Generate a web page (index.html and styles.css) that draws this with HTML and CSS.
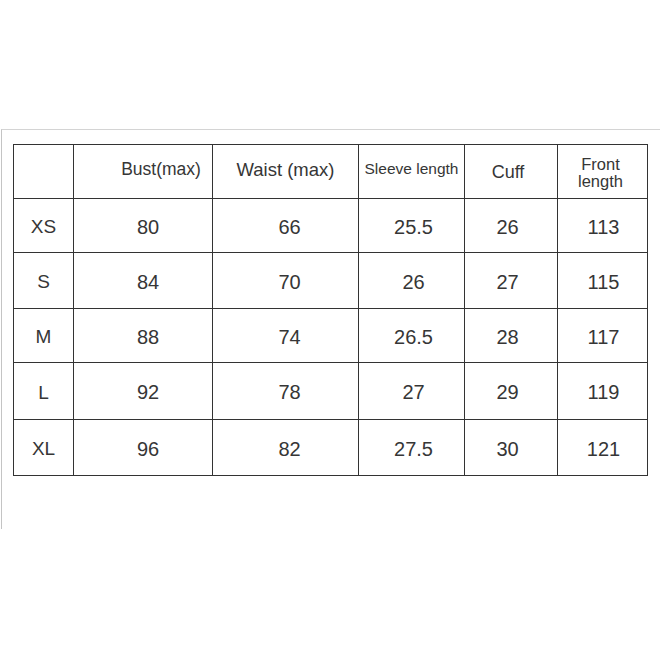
FILE: index.html
```html
<!DOCTYPE html>
<html>
<head>
<meta charset="utf-8">
<link rel="stylesheet" href="styles.css">
</head>
<body>
<div class="frame">
  <div class="chart">
    <div class="cell head"></div>
    <div class="cell head bust">Bust(max)</div>
    <div class="cell head waist">Waist (max)</div>
    <div class="cell head sleeve">Sleeve length</div>
    <div class="cell head cuff">Cuff</div>
    <div class="cell head front">Front<br>length</div>

    <div class="cell size">XS</div><div class="cell c2">80</div><div class="cell c3">66</div><div class="cell c4">25.5</div><div class="cell c5">26</div><div class="cell c6">113</div>
    <div class="cell size">S</div><div class="cell c2">84</div><div class="cell c3">70</div><div class="cell c4">26</div><div class="cell c5">27</div><div class="cell c6">115</div>
    <div class="cell size">M</div><div class="cell c2">88</div><div class="cell c3">74</div><div class="cell c4">26.5</div><div class="cell c5">28</div><div class="cell c6">117</div>
    <div class="cell size">L</div><div class="cell c2">92</div><div class="cell c3">78</div><div class="cell c4">27</div><div class="cell c5">29</div><div class="cell c6">119</div>
    <div class="cell size">XL</div><div class="cell c2">96</div><div class="cell c3">82</div><div class="cell c4">27.5</div><div class="cell c5">30</div><div class="cell c6">121</div>
  </div>
</div>
</body>
</html>
```
FILE: styles.css
```css
html, body {
  margin: 0;
  padding: 0;
  background: #ffffff;
}
body {
  width: 660px;
  height: 660px;
  overflow: hidden;
  font-family: "Liberation Sans", Arial, sans-serif;
  color: #363636;
}
.frame {
  margin-top: 129px;
  margin-left: 1px;
  height: 400px;
  border-top: 1px solid #d4d4d4;
  border-left: 1px solid #c4c4c4;
  padding: 14px 0 0 11px;
  box-sizing: border-box;
}
.chart {
  display: grid;
  grid-template-columns: 60px 139px 146px 106px 93px 90px;
  grid-template-rows: 54px 54px 56px 54px 57px 56px;
  width: max-content;
  border-top: 1px solid #333333;
  border-left: 1px solid #333333;
}
.cell {
  display: flex;
  align-items: center;
  justify-content: center;
  text-align: center;
  border-right: 1px solid #333333;
  border-bottom: 1px solid #333333;
  font-size: 20px;
  line-height: 1;
  padding-top: 2px;
}
.size {
  font-size: 19px;
}
.c2 { padding-left: 10px; }
.c3 { padding-left: 8px; }
.c4 { padding-left: 4px; }
.c5 { padding-right: 7px; }
.c6 { padding-left: 2px; }
.head {
  font-size: 18px;
  padding-top: 0;
  padding-bottom: 3px;
}
.bust {
  font-size: 17.5px;
  padding-left: 36px;
}
.waist {
  font-size: 18.5px;
}
.sleeve {
  font-size: 15.5px;
  padding-bottom: 6px;
  white-space: nowrap;
}
.cuff {
  padding-right: 6px;
  padding-bottom: 0;
}
.front {
  font-size: 16.5px;
  line-height: 17px;
  padding-right: 4px;
  padding-top: 2px;
  padding-bottom: 0;
}
```
